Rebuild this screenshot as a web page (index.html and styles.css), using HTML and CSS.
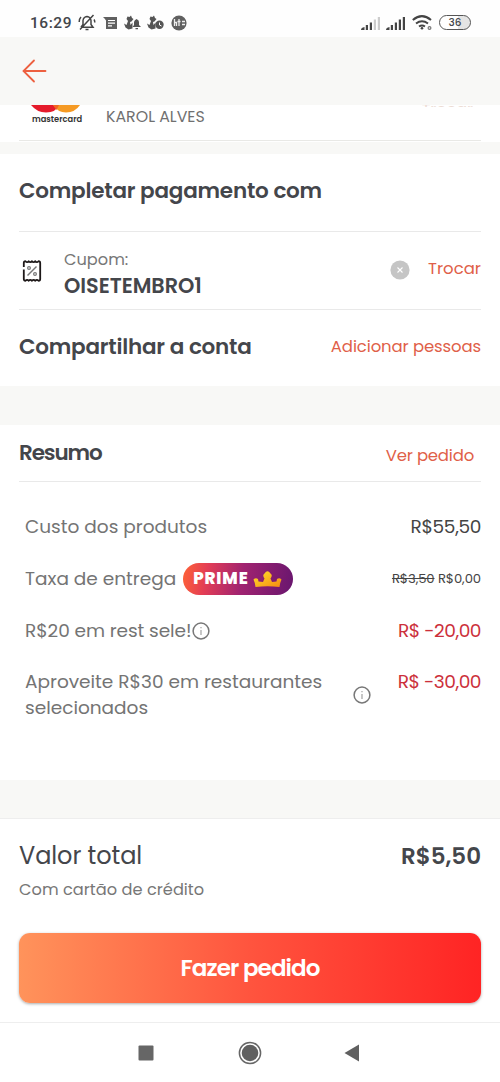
FILE: index.html
```html
<!DOCTYPE html>
<html lang="pt-BR">
<head>
<meta charset="utf-8">
<title>Pagamento</title>
<link rel="stylesheet" href="styles.css">
</head>
<body>
<header class="status">
  <div class="status-left">
    <span class="clock">16:29</span>
    <svg class="icon-bell" width="18" height="17" viewBox="0 0 18 17" fill="none" stroke="#444" stroke-width="1.5"><path d="M3 13.200h12l-2-2.700V6.500Q12.500 3 9 2.500Q5.500 3 5 6.500V10.500L3 13.200M7.500 15.500h3M15.500 1L2 15.500M1.200 8Q1 5 3 3M16.800 8.500q0-2-.800-3"/></svg>
    <svg class="icon-news" width="15" height="14" viewBox="0 0 15 14"><path fill="#606060" d="M0 1h14v12H3V4.500Q2 2.500 0 1z"/><path stroke="#fff" stroke-width="1.200" d="M5 4.500h7M5 7.200h7M5 9.800h4"/></svg>
    <svg class="icon-hand" width="17" height="15" viewBox="0 0 17 15"><path fill="#555" d="M3.500 1.500l2 .500L7 .500l1 2.500 1.500 1-2 2.500-1.500.500.500 3 2-2.500v6l-4 1-3-2L0 8.500l2.500 1.500L4 6 2.500 4z"/><path fill="#555" d="M8.500 12l1.500-2V7q.500-2 2.500-3 2.500 1 2.500 3v3l2 2zM11.500 13h2.500v1.200h-2.500z"/></svg>
    <svg class="icon-hand" width="17" height="15" viewBox="0 0 17 15"><path fill="#555" d="M3.500 1.500l2 .500L7 .500l1 2.500 1.500 1-2 2.500-1.500.500.500 3 2-2.500v6l-4 1-3-2L0 8.500l2.500 1.500L4 6 2.500 4z"/><circle cx="12.500" cy="9.800" r="4.200" fill="#555"/><path d="M12.500 7.500v2.500l2 1" fill="none" stroke="#fff"/></svg>
    <svg class="icon-round" width="16" height="16" viewBox="0 0 16 16"><circle cx="8" cy="8" r="7.600" fill="#606060"/><path d="M3.500 4v7M3.500 7.500h2V11M8 4v7M6.500 6.500h3M11 6.500h3M11 9.500h3" fill="none" stroke="#eee" stroke-width="1.300"/></svg>
  </div>
  <div class="status-right">
    <svg width="20" height="14" viewBox="0 0 20 14" fill="#444"><path d="M0 14q0-2.500 3.500-3V14zM4.800 14V9h2.200v5zM8.800 14V6.500H11V14z"/><path fill="#ccc" d="M12.800 14V3.500H15V14zM16.800 14V1H19v13z"/></svg>
    <svg class="signal-two" width="20" height="14" viewBox="0 0 20 14" fill="#444"><path d="M0 14q0-2.500 3.500-3V14zM4.800 14V9h2.200v5zM8.800 14V6.500H11V14zM12.800 14V3.500H15V14zM16.800 14V1H19v13z"/></svg>
    <svg class="wifi" width="20" height="15" viewBox="0 0 20 15" fill="none" stroke="#444" stroke-width="2"><path d="M.800 5Q10-2.800 19 5M4 8.500q6-4.500 12 0M7 11.500q3-2 6 0"/><circle cx="10" cy="13.200" r="1.300" fill="#444" stroke="none"/><circle cx="17.500" cy="13" r="1.400" stroke="#777" stroke-width="1.200"/></svg>
    <span class="battery">36</span>
  </div>
</header>
<nav class="topbar">
  <svg width="26" height="24" viewBox="0 0 26 24" fill="none" stroke="#ed6040" stroke-width="1.800" stroke-linecap="round"><path d="M23.500 12H2M12 1.500L1.500 12L12 22.500"/></svg>
</nav>
<main>
  <section class="card-row">
    <div class="mastercard">
      <svg width="50" height="8" viewBox="0 0 50 8"><path fill="#e51b2b" d="M0 0h28q-3 7.500-13 7.500Q6 7.500 0 0z"/><path fill="#f59a24" d="M22 0h27q-5 7.500-14 7.500-8 0-13-7.500z"/><path fill="#f26522" d="M22 0h6l-2.500 5z"/></svg>
      <span class="mc-name">mastercard</span>
    </div>
    <span class="holder">KAROL ALVES</span>
    <span class="clipped"><span>Trocar</span></span>
  </section>
  <section class="payment">
    <h2 class="pay-title">Completar pagamento com</h2>
    <div class="coupon">
      <svg class="ticket" width="20" height="24" viewBox="0 0 20 24" fill="none"><path stroke="#1d1818" stroke-width="1.800" stroke-linejoin="round" d="M1.800 8V4Q1.800 2.200 3.500 2.200q1.600 2 3.200 0 1.600 2 3.300 0 1.600 2 3.300 0 1.600 2 3.200 0 1.700 0 1.700 1.800v16q0 1.800-1.700 1.800-1.600-2-3.200 0-1.700-2-3.300 0-1.700-2-3.300 0-1.600-2-3.200 0-1.700 0-1.700-1.800v-9.500"/><path stroke="#777" stroke-width="1.400" d="M5.500 16.500l9-9"/><circle cx="7" cy="9" r="1.400" stroke="#777" stroke-width="1.200"/><circle cx="13" cy="15" r="1.400" stroke="#777" stroke-width="1.200"/></svg>
      <div class="coupon-text"><span class="coupon-label">Cupom:</span><strong class="coupon-code">OISETEMBRO1</strong></div>
      <svg class="clear" width="20" height="20" viewBox="0 0 20 20"><circle cx="10" cy="10" r="9.600" fill="#c5c5c5"/><path stroke="#fff" stroke-width="1.100" d="M7.500 7.500l5 5M12.500 7.500l-5 5"/></svg>
      <a class="link change">Trocar</a>
    </div>
    <div class="share"><h2>Compartilhar a conta</h2><a class="link add">Adicionar pessoas</a></div>
  </section>
  <section class="summary">
    <div class="summary-head"><h2 class="summary-title">Resumo</h2><a class="link view">Ver pedido</a></div>
    <div class="line"><span>Custo dos produtos</span><span class="value">R$55,50</span></div>
    <div class="line"><span>Taxa de entrega</span>
      <span class="prime"><span class="prime-text">PRIME</span><svg width="29" height="18" viewBox="0 0 29 18"><defs><linearGradient id="gold" x2="1" y2="1"><stop stop-color="#ffe02b"/><stop offset="1" stop-color="#f58a12"/></linearGradient></defs><path fill="url(#gold)" d="M.500 9.500Q2.500 7.500 5 9l.500 2.500 4.500.500 1.500-3.500Q9 5 11.500 3.500Q14.500-1 17.500 3.500q2.500 1.500 0 5L19 12l4.500-.500L24 9q2.500-1.500 4.500.500-1.500 3-2 7.500-12-1.500-24 0Q2 12.500.500 9.500z"/></svg></span>
      <span class="value fee"><s>R$3,50</s> R$0,00</span></div>
    <div class="line"><span class="rest">R$20 em rest sele!</span><svg class="info" width="18" height="18" viewBox="0 0 18 18"><circle cx="9" cy="9" r="7.900" fill="none" stroke="#777" stroke-width="1.500"/><path stroke="#999" stroke-width="1.100" d="M9 8v5M9 5v1.300"/></svg><span class="value discount">R$ -20,00</span></div>
    <div class="line tall"><span>Aproveite R$30 em restaurantes<br>selecionados</span><svg class="info far" width="18" height="18" viewBox="0 0 18 18"><circle cx="9" cy="9" r="7.900" fill="none" stroke="#777" stroke-width="1.500"/><path stroke="#999" stroke-width="1.100" d="M9 8v5M9 5v1.300"/></svg><span class="value discount">R$ -30,00</span></div>
  </section>
</main>
<footer class="checkout">
  <div class="total"><span class="total-label">Valor total</span><strong class="total-value">R$5,50</strong></div>
  <p class="method">Com cartão de crédito</p>
  <button class="order">Fazer pedido</button>
</footer>
<nav class="system">
  <svg width="16" height="16" viewBox="0 0 16 16"><rect x=".5" y=".5" width="15" height="15" rx="1" fill="#666"/></svg>
  <svg width="24" height="24" viewBox="0 0 24 24"><circle cx="12" cy="12" r="10.600" fill="none" stroke="#666" stroke-width="1.500"/><circle cx="12" cy="12" r="8.300" fill="#606060"/></svg>
  <svg width="16" height="18" viewBox="0 0 16 18"><path d="M.5 9L15 .5v17z" fill="#606060"/></svg>
</nav>
</body>
</html>
```
FILE: styles.css
```css
* { box-sizing: border-box; }
body { margin: 0; width: 500px; height: 1082px; overflow: hidden; background: #f8f8f6; color: #44464b; font-family: Poppins, Inter, "Liberation Sans", sans-serif; }
svg { display: block; flex: none; }
span, a, strong { white-space: nowrap; }
h2, p { margin: 0; }
h2 { font-size: 21.5px; line-height: 30px; font-weight: 600; letter-spacing: -.22px; }
.status { height: 37px; padding: 8px 29px 0 30px; display: flex; justify-content: space-between; background: #fefefe; }
.status-left, .status-right { display: flex; height: 29px; align-items: center; }
.clock { font: 500 15.5px/30px Roboto, sans-serif; letter-spacing: .55px; width: 48px; }
.icon-news { margin-left: 7px; }
.icon-hand { margin-left: 6px; }
.icon-round { margin-left: 7px; }
.signal-two { margin-left: 5px; }
.wifi { margin-left: 6px; }
.battery { width: 32px; height: 15px; margin-left: 7px; border: 1.5px solid #555; border-radius: 8px; background: linear-gradient(90deg, #fff 60%, #e4e4e4 60%); font-size: 10.5px; line-height: 13px; text-align: center; font-weight: 500; }
.topbar { height: 68px; padding: 22px 22px 0; }
.card-row { height: 37px; margin-bottom: 12px; padding: 0 19px; display: flex; position: relative; background: #fff; }
.card-row::after { content: ""; position: absolute; left: 19px; right: 19px; bottom: 1px; height: 1px; background: #e9e9e6; }
.mastercard { width: 87px; padding-left: 12px; }
.mc-name { display: block; margin-left: 1px; font-size: 8.3px; line-height: 12px; font-weight: 600; color: #333; }
.holder { font-size: 15.8px; line-height: 24px; color: #707070; }
.clipped { margin-left: auto; margin-right: 8px; height: 2px; overflow: hidden; color: #ecdcd4; font-size: 16px; line-height: 2px; }
.clipped span { display: block; margin-top: -5px; line-height: 20px; height: 20px; }
.payment { height: 232px; padding: 0 19px; background: #fff; }
.pay-title { height: 78px; padding-top: 22px; border-bottom: 1px solid #e9e9e9; }
.coupon { height: 78px; display: flex; border-bottom: 1px solid #e9e9e9; }
.ticket { margin: 27px 0 0 3px; }
.coupon-text { margin-left: 22px; padding-top: 15px; display: flex; flex-direction: column; align-items: flex-start; }
.coupon-label { font-size: 16.2px; line-height: 25px; color: #777; }
.coupon-code { font-size: 20.8px; line-height: 28px; font-weight: 600; letter-spacing: -.04px; }
.clear { margin: 28px 18px 0 auto; }
.link { color: #df5f49; font-size: 16.5px; letter-spacing: -.12px; }
.change { line-height: 74px; letter-spacing: 0; }
.share { display: flex; justify-content: space-between; padding-top: 22px; line-height: 30px; }
.summary { margin-top: 39px; height: 355px; padding: 0 19px; background: #fff; }
.summary-head { height: 57px; padding-top: 13px; display: flex; justify-content: space-between; border-bottom: 1px solid #e9e9e9; }
.summary-title { letter-spacing: -1.1px; }
.view { line-height: 35px; margin-right: 7px; letter-spacing: -.2px; }
.summary-head + .line { margin-top: 19px; }
.line { height: 52px; padding-left: 6px; display: flex; align-items: center; color: #747474; font-size: 18.5px; line-height: 26px; }
.rest { letter-spacing: -.08px; }
.value { margin-left: auto; color: #444; font-size: 18.5px; letter-spacing: -.35px; }
.fee { font-size: 13.2px; letter-spacing: -.1px; }
.discount { color: #cc303b; font-size: 18.6px; letter-spacing: -.5px; }
.prime { width: 110px; height: 32px; margin-left: 7px; padding-left: 10px; display: flex; align-items: center; border-radius: 16px; background: linear-gradient(100deg, #ff6336 0%, #e33d55 22%, #a12370 53%, #68166f 100%); color: #fff; }
.prime svg { margin-left: 4px; }
.prime-text { font-weight: 800; font-size: 16.5px; letter-spacing: .9px; }
.info { margin-left: 1px; }
.tall { height: 78px; align-items: flex-start; padding-top: 12px; }
.far { margin: 17px 0 0 31px; }
.checkout { margin-top: 38px; height: 204px; padding: 18px 19px 0; background: #fff; border-top: 1px solid #eee; }
.total { display: flex; justify-content: space-between; line-height: 38px; font-size: 24px; }
.total-label { letter-spacing: -.08px; }
.total-value { font-weight: 600; font-size: 23px; }
.method { font-size: 16.2px; line-height: 30px; color: #777; letter-spacing: .03px; }
.order { display: block; width: 462px; height: 70px; margin-top: 28px; border: 0; border-radius: 11px; background: linear-gradient(90deg, #ff935b, #ff543e 50%, #ff2424); box-shadow: 0 1px 3px #aaa; color: #fff; font: inherit; font-size: 23px; font-weight: 600; letter-spacing: -.9px; }
.system { height: 60px; border-top: 1px solid #eee; background: #fff; display: flex; align-items: center; padding-left: 138px; }
.system svg + svg { margin-left: 84px; }
.system svg:last-child { margin-left: 82px; }
```
